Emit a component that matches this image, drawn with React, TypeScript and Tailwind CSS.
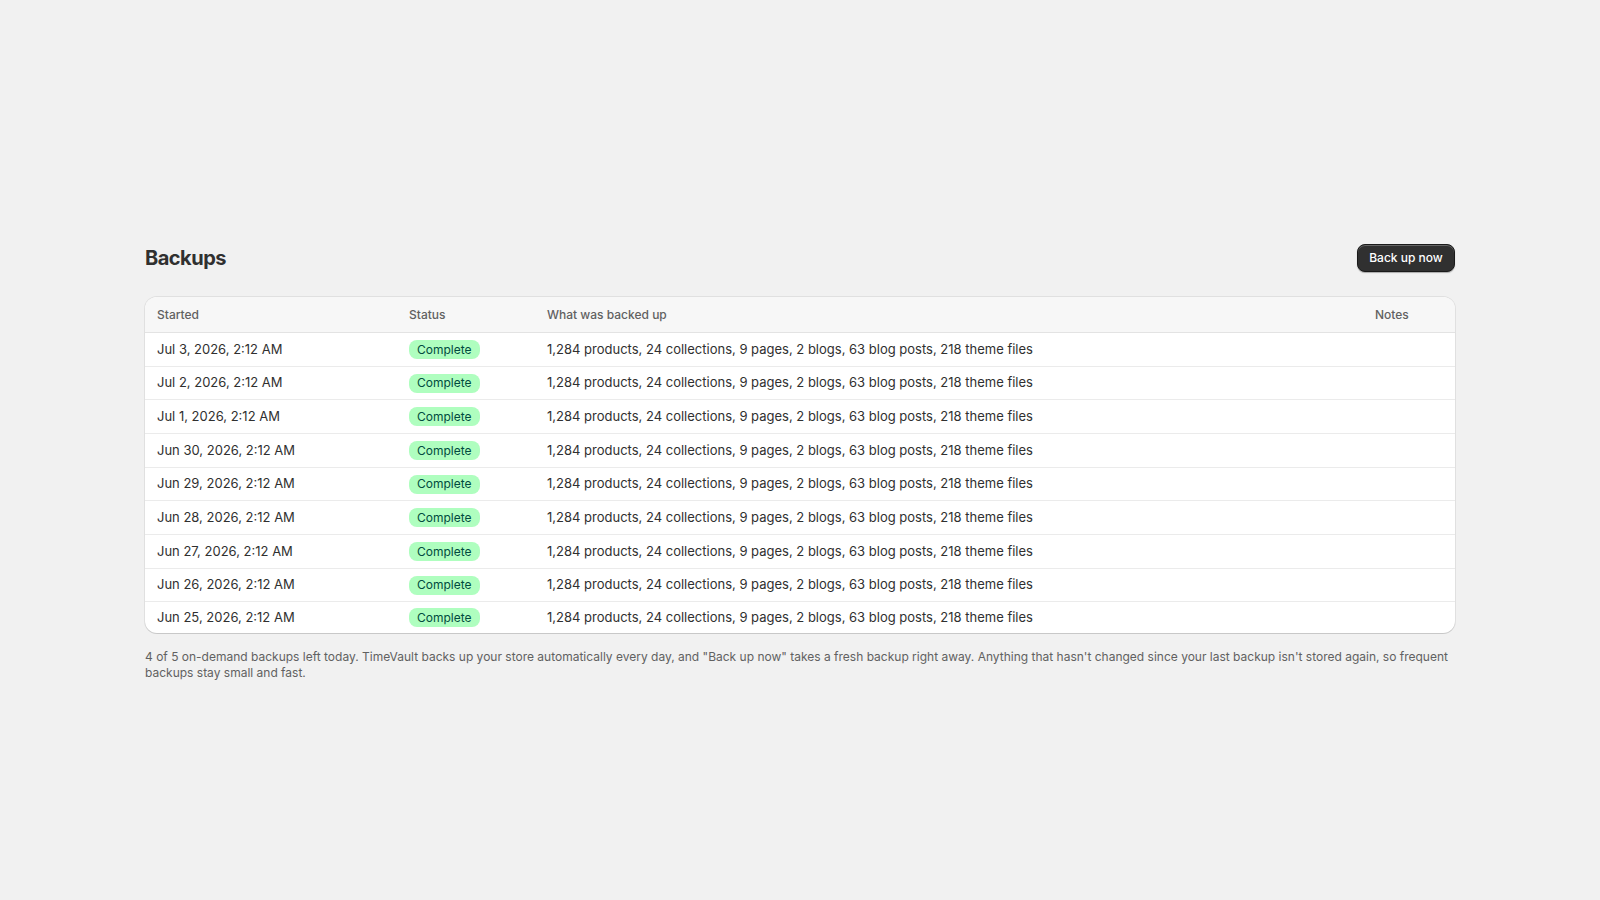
import React from "react";

const rows = [
  "Jul 3, 2026, 2:12 AM",
  "Jul 2, 2026, 2:12 AM",
  "Jul 1, 2026, 2:12 AM",
  "Jun 30, 2026, 2:12 AM",
  "Jun 29, 2026, 2:12 AM",
  "Jun 28, 2026, 2:12 AM",
  "Jun 27, 2026, 2:12 AM",
  "Jun 26, 2026, 2:12 AM",
  "Jun 25, 2026, 2:12 AM",
];

const what =
  "1,284 products, 24 collections, 9 pages, 2 blogs, 63 blog posts, 218 theme files";

export default function App() {
  return (
    <div
      className="min-h-[900px] w-full bg-[#f1f1f1] text-[#303030]"
      style={{ fontFamily: "Inter, 'Noto Sans', sans-serif" }}
    >
      <div className="mx-auto w-[1310px] pt-[244px]">
        <div className="flex h-[28px] items-center justify-between">
          <h1 className="text-[20px] font-bold leading-7 tracking-[-0.5px] text-[#303030]">
            Backups
          </h1>
          <button className="h-[28px] w-[98px] rounded-[8px] border border-[#1a1a1a] bg-[#303030] text-[12px] font-medium text-white shadow-[inset_0_1px_0_0_rgba(255,255,255,0.25),0_1px_1px_0_rgba(0,0,0,0.3)]">
            Back up now
          </button>
        </div>

        <div className="mt-[25px] overflow-hidden rounded-[12px] bg-white shadow-[0_0_0_1px_rgba(0,0,0,0.07),0_1px_0_0_rgba(0,0,0,0.1)]">
          <div className="grid h-[36px] grid-cols-[252px_138px_1fr_92px] items-center border-b border-[#e3e3e3] bg-[#f7f7f7] text-[12px] font-medium text-[#616161]">
            <div className="px-3">Started</div>
            <div className="px-3">Status</div>
            <div className="px-3">What was backed up</div>
            <div className="px-3">Notes</div>
          </div>
          {rows.map((d, i) => {
            const last = i === rows.length - 1;
            return (
              <div
                key={d}
                className={`grid grid-cols-[252px_138px_1fr_92px] items-center text-[13px] text-[#303030] ${
                  last ? "h-[30.5px]" : "h-[33.67px] border-b border-[#ebebeb]"
                }`}
              >
                <div className="px-3">{d}</div>
                <div className="px-3">
                  <span className="inline-flex h-[19px] items-center rounded-[8px] bg-[#affebf] px-2 text-[12px] font-normal text-[#014b40]">
                    Complete
                  </span>
                </div>
                <div className="px-3">{what}</div>
                <div className="px-3"></div>
              </div>
            );
          })}
        </div>

        <p className="mt-[16px] text-[12px] leading-4 text-[#616161]">
          4 of 5 on-demand backups left today. TimeVault backs up your store
          automatically every day, and "Back up now" takes a fresh backup right
          away. Anything that hasn't changed since your last backup isn't stored
          again, so frequent backups stay small and fast.
        </p>
      </div>
    </div>
  );
}
